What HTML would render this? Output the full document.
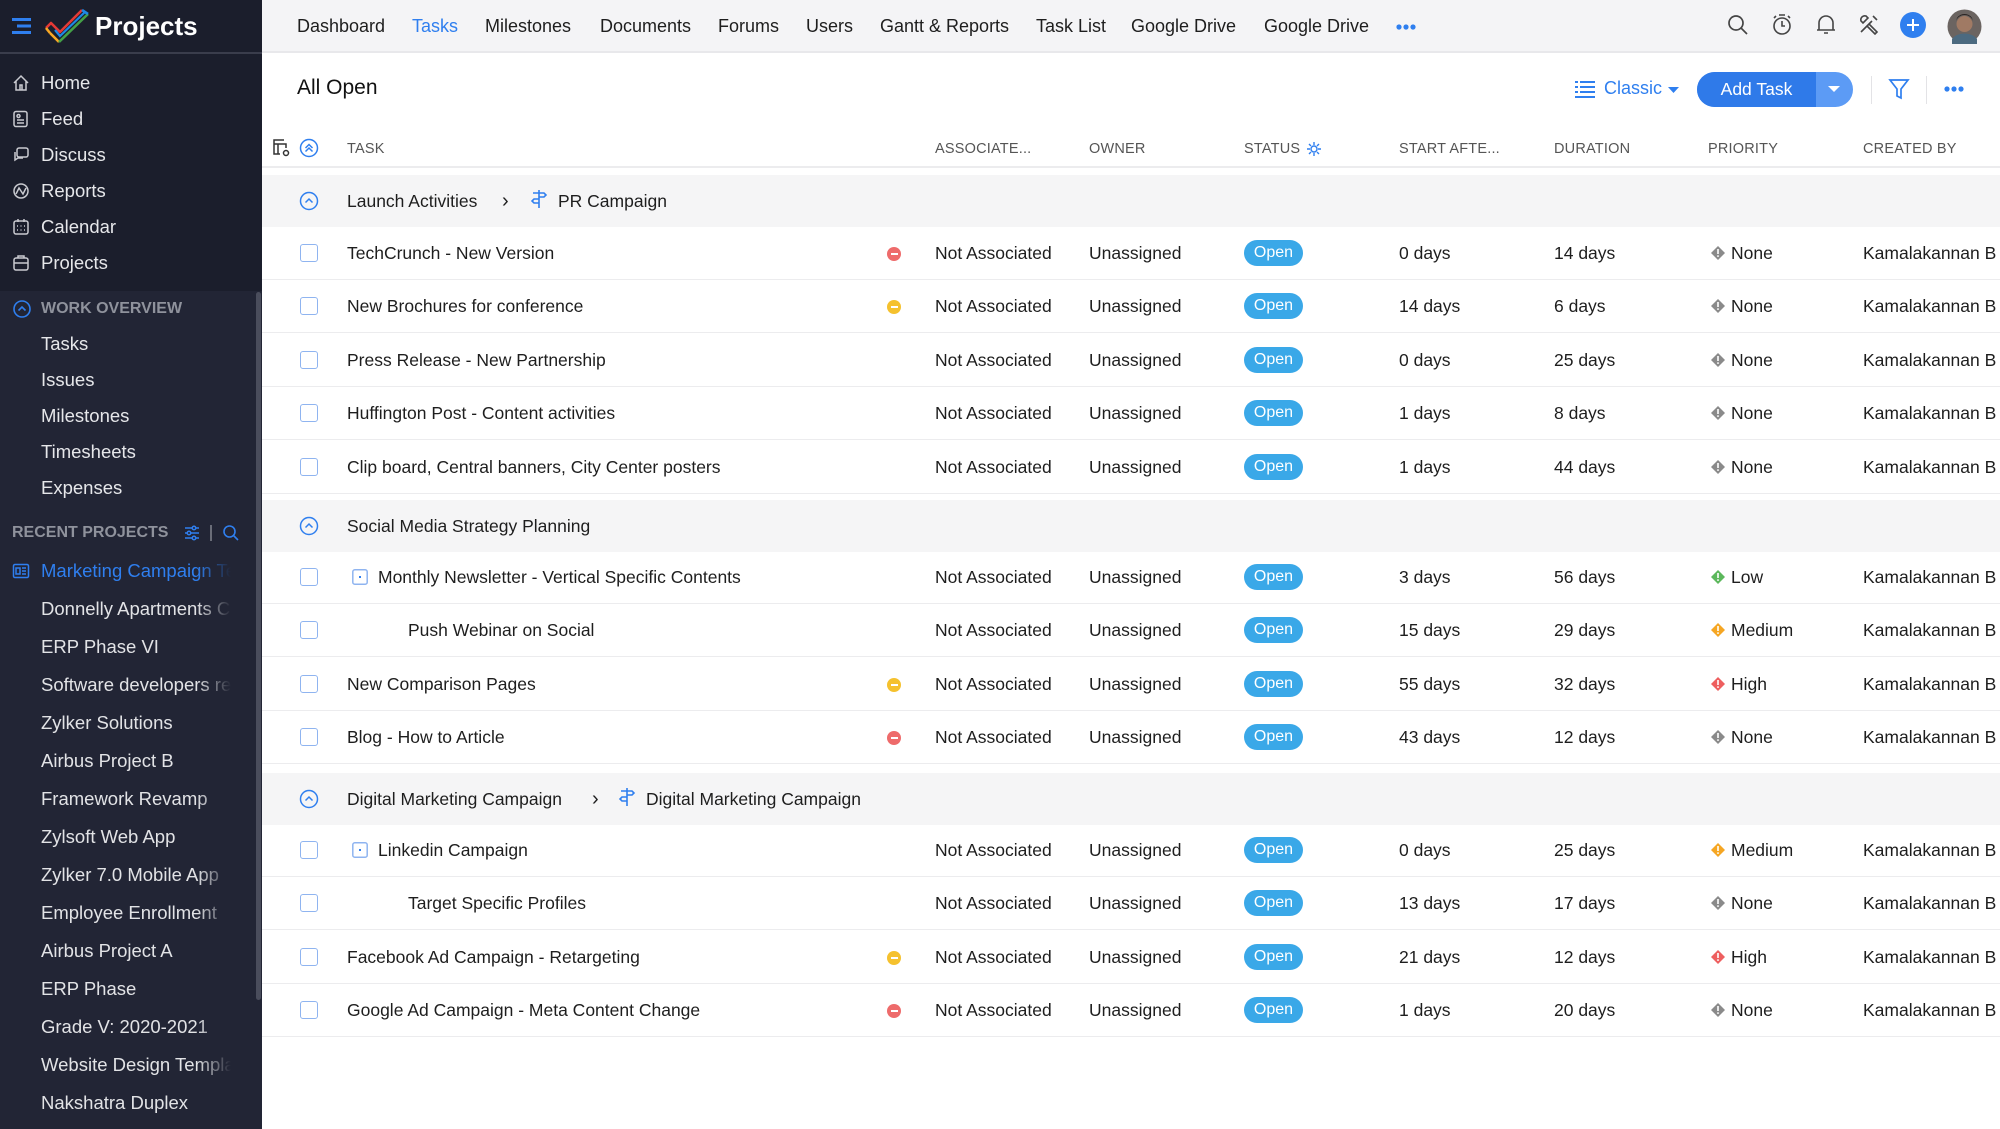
<!DOCTYPE html>
<html><head><meta charset="utf-8">
<style>
*{margin:0;padding:0;box-sizing:border-box}
body{width:2000px;height:1129px;overflow:hidden;background:#fff;font-family:"Liberation Sans",sans-serif;color:#1e1e1e;position:relative}
.a{position:absolute;white-space:nowrap}
#sb{position:absolute;left:0;top:0;width:262px;height:1129px;background:#222535}
#sbtop{position:absolute;left:0;top:0;width:262px;height:291px;background:#1b1e2c}
.si{position:absolute;left:41px;font-size:18.5px;color:#e6e7ea;white-space:nowrap}
.sic{position:absolute;left:12px}
.pi{position:absolute;left:41px;font-size:18.5px;color:#e2e3e6;width:190px;overflow:hidden;white-space:nowrap;
 -webkit-mask-image:linear-gradient(to right,#000 82%,transparent);mask-image:linear-gradient(to right,#000 82%,transparent)}
#top{position:absolute;left:262px;top:0;width:1738px;height:53px;background:#f4f4f6;border-bottom:2px solid #e8e8eb}
.nv{position:absolute;top:16px;font-size:18px;color:#1e1e1e;white-space:nowrap}
.hd{position:absolute;top:140px;font-size:14.5px;color:#555;letter-spacing:.2px;white-space:nowrap}
.row{position:absolute;left:262px;width:1738px;height:54px;border-bottom:1px solid #ececee}
.grp{position:absolute;left:262px;width:1738px;background:#f5f5f6}
.c{position:absolute;top:0;line-height:54px;font-size:17.5px;color:#1e1e1e;white-space:nowrap}
.cb{position:absolute;left:38px;top:18px;width:18px;height:18px;border:1.6px solid #8fb4f0;border-radius:3px}
.dot{position:absolute;left:625px;top:21px;width:14px;height:14px;border-radius:50%}
.dot:after{content:"";position:absolute;left:3.5px;top:6px;width:7px;height:2px;background:#fff}
.pill{position:absolute;left:982px;top:14px;width:59px;height:26px;border-radius:13px;background:#3aa8e8;color:#fff;font-size:16px;line-height:26px;text-align:center}
.pr{position:absolute;left:1449px;top:20px;width:14px;height:14px}
</style></head><body>

<div id="sb"><div id="sbtop"></div>
<div style="position:absolute;left:0;top:52px;width:262px;height:2px;background:#3a3d4c"></div>
<div style="position:absolute;left:256px;top:292px;width:5px;height:708px;background:#4a4d5c;border-radius:3px"></div>
<svg class="a" style="left:12px;top:18px" width="20" height="16"><rect x="0" y="0" width="19" height="3" fill="#2f7fef"/><rect x="5" y="6.5" width="14" height="3" fill="#2f7fef"/><rect x="0" y="13" width="19" height="3" fill="#2f7fef"/></svg>
<svg class="a" style="left:44px;top:6px" width="48" height="40" viewBox="0 0 48 40">
<path d="M2 22 L7 17 L16 26 L38 4" stroke="#e53935" stroke-width="2.6" fill="none" stroke-linejoin="round"/>
<path d="M6 27 L15 36" stroke="#f9a825" stroke-width="2.6" fill="none"/>
<path d="M2 22 L6 27" stroke="#f9a825" stroke-width="2.6" fill="none"/>
<path d="M15 36 L44 8" stroke="#43a047" stroke-width="2.6" fill="none"/>
<path d="M38 4 L44 8" stroke="#1e88e5" stroke-width="2.6" fill="none"/>
<path d="M11 24 L16 30 L41 6" stroke="#1e88e5" stroke-width="2.2" fill="none"/>
</svg>
<div class="a" style="left:95px;top:11px;font-size:26px;color:#fff;font-weight:bold">Projects</div>

<svg class="sic" style="top:74px" width="18" height="18" viewBox="0 0 18 18" fill="none" stroke="#c9cad0" stroke-width="1.5"><path d="M2 9 L9 2 L16 9 M4 7 V16 H14 V7 M8 16 V11 H10 V16"/></svg>
<div class="si" style="top:72px">Home</div>
<svg class="sic" style="top:110px" width="18" height="18" viewBox="0 0 18 18" fill="none" stroke="#c9cad0" stroke-width="1.5"><rect x="2" y="1.5" width="13" height="15" rx="2"/><path d="M5 10 H12 M5 13 H12"/><circle cx="6.5" cy="6" r="1.5"/></svg>
<div class="si" style="top:108px">Feed</div>
<svg class="sic" style="top:146px" width="18" height="18" viewBox="0 0 18 18" fill="none" stroke="#c9cad0" stroke-width="1.5"><rect x="5" y="2" width="11" height="9" rx="2"/><path d="M3 6 V14 L6 12 H11"/></svg>
<div class="si" style="top:144px">Discuss</div>
<svg class="sic" style="top:182px" width="18" height="18" viewBox="0 0 18 18" fill="none" stroke="#c9cad0" stroke-width="1.5"><circle cx="9" cy="9" r="7"/><path d="M4 12 L7 6 L11 12 L14 6"/></svg>
<div class="si" style="top:180px">Reports</div>
<svg class="sic" style="top:218px" width="18" height="18" viewBox="0 0 18 18" fill="none" stroke="#c9cad0" stroke-width="1.5"><rect x="2" y="3" width="14" height="13" rx="2"/><path d="M6 1 V4 M12 1 V4 M5 8 H6 M8.5 8 H9.5 M12 8 H13 M5 12 H6 M8.5 12 H9.5 M12 12 H13"/></svg>
<div class="si" style="top:216px">Calendar</div>
<svg class="sic" style="top:254px" width="18" height="18" viewBox="0 0 18 18" fill="none" stroke="#c9cad0" stroke-width="1.5"><rect x="2" y="4" width="14" height="12" rx="2"/><path d="M6 4 V2 H12 V4 M2 9 H16"/></svg>
<div class="si" style="top:252px">Projects</div>

<svg class="sic" style="top:299px" width="20" height="20" viewBox="0 0 20 20" fill="none" stroke="#2f7fef" stroke-width="1.6"><circle cx="10" cy="10" r="8"/><path d="M6.5 11.5 L10 8 L13.5 11.5"/></svg>
<div class="a" style="left:41px;top:300px;font-size:16px;color:#8f929c;font-weight:bold">WORK OVERVIEW</div>
<div class="si" style="top:333px">Tasks</div>
<div class="si" style="top:369px">Issues</div>
<div class="si" style="top:405px">Milestones</div>
<div class="si" style="top:441px">Timesheets</div>
<div class="si" style="top:477px">Expenses</div>

<div class="a" style="left:12px;top:524px;font-size:16px;color:#8f929c;font-weight:bold">RECENT PROJECTS</div>
<svg class="a" style="left:183px;top:524px" width="18" height="18" viewBox="0 0 18 18" fill="none" stroke="#2f7fef" stroke-width="1.5"><path d="M2 4 H16 M2 9 H16 M2 14 H16"/><circle cx="11" cy="4" r="1.8" fill="#222535"/><circle cx="6" cy="9" r="1.8" fill="#222535"/><circle cx="11" cy="14" r="1.8" fill="#222535"/></svg>
<div class="a" style="left:210px;top:525px;width:1.5px;height:16px;background:#6a6d78"></div>
<svg class="a" style="left:222px;top:524px" width="18" height="18" viewBox="0 0 18 18" fill="none" stroke="#2f7fef" stroke-width="1.6"><circle cx="7.5" cy="7.5" r="5.5"/><path d="M11.5 11.5 L16 16"/></svg>

<svg class="sic" style="top:562px" width="18" height="18" viewBox="0 0 18 18" fill="none" stroke="#2f7fef" stroke-width="1.5"><rect x="1.5" y="2.5" width="15" height="13" rx="1.5"/><rect x="4" y="6" width="4" height="6"/><path d="M10 6 H14 M10 9 H14 M10 12 H14"/></svg>
<div class="pi" style="top:560px;color:#2f7fef">Marketing Campaign Team</div>
<div class="pi" style="top:598px">Donnelly Apartments Construction</div>
<div class="pi" style="top:636px">ERP Phase VI</div>
<div class="pi" style="top:674px">Software developers recruitment</div>
<div class="pi" style="top:712px">Zylker Solutions</div>
<div class="pi" style="top:750px">Airbus Project B</div>
<div class="pi" style="top:788px">Framework Revamp</div>
<div class="pi" style="top:826px">Zylsoft Web App</div>
<div class="pi" style="top:864px">Zylker 7.0 Mobile App</div>
<div class="pi" style="top:902px">Employee Enrollment</div>
<div class="pi" style="top:940px">Airbus Project A</div>
<div class="pi" style="top:978px">ERP Phase</div>
<div class="pi" style="top:1016px">Grade V: 2020-2021</div>
<div class="pi" style="top:1054px">Website Design Templates</div>
<div class="pi" style="top:1092px">Nakshatra Duplex</div>
</div>

<div id="top"></div>
<div class="nv" style="left:297px">Dashboard</div>
<div class="nv" style="left:412px;color:#2f7fef">Tasks</div>
<div class="nv" style="left:485px">Milestones</div>
<div class="nv" style="left:600px">Documents</div>
<div class="nv" style="left:718px">Forums</div>
<div class="nv" style="left:806px">Users</div>
<div class="nv" style="left:880px">Gantt &amp; Reports</div>
<div class="nv" style="left:1036px">Task List</div>
<div class="nv" style="left:1131px">Google Drive</div>
<div class="nv" style="left:1264px">Google Drive</div>
<svg class="a" style="left:1396px;top:24px" width="20" height="6"><circle cx="3" cy="3" r="2.6" fill="#2f7fef"/><circle cx="10" cy="3" r="2.6" fill="#2f7fef"/><circle cx="17" cy="3" r="2.6" fill="#2f7fef"/></svg>

<svg class="a" style="left:1727px;top:14px" width="22" height="22" viewBox="0 0 22 22" fill="none" stroke="#444" stroke-width="1.7"><circle cx="9" cy="9" r="7"/><path d="M14 14 L20 20"/></svg>
<svg class="a" style="left:1771px;top:13px" width="22" height="23" viewBox="0 0 22 23" fill="none" stroke="#444" stroke-width="1.6"><circle cx="11" cy="13" r="8"/><path d="M11 8 V13 H14 M8 2 H14 M3 5 L5 3 M19 5 L17 3"/></svg>
<svg class="a" style="left:1815px;top:13px" width="22" height="23" viewBox="0 0 22 23" fill="none" stroke="#444" stroke-width="1.6"><path d="M4 17 V10 A7 7 0 0 1 18 10 V17 H4 Z M2 17 H20 M9 20 H13"/></svg>
<svg class="a" style="left:1858px;top:13px" width="22" height="22" viewBox="0 0 22 22" fill="none" stroke="#444" stroke-width="1.6"><path d="M3 19 L14 8 M8 3 A4 4 0 0 0 3 8 L5 10 L10 5 Z M11 11 L19 19 L17 21 L9 13"/><path d="M15 3 L19 7"/></svg>
<svg class="a" style="left:1900px;top:12px" width="26" height="26"><circle cx="13" cy="13" r="13" fill="#2f7fef"/><path d="M13 7 V19 M7 13 H19" stroke="#fff" stroke-width="2"/></svg>
<svg class="a" style="left:1947px;top:9px" width="35" height="35"><circle cx="17.5" cy="17.5" r="17" fill="#6b6461"/><circle cx="17.5" cy="15" r="8" fill="#a07a64"/><path d="M9 12 A9 9 0 0 1 26 12 L25 9 A9 9 0 0 0 10 9Z" fill="#2a2220"/><path d="M5 30 A14 10 0 0 1 30 30 L30 35 L5 35Z" fill="#4c6a80"/></svg>

<div class="a" style="left:297px;top:76px;font-size:21px;color:#111">All Open</div>
<svg class="a" style="left:1575px;top:80px" width="20" height="18" viewBox="0 0 20 18" fill="#2f7fef"><rect x="0" y="1" width="3" height="2"/><rect x="5" y="1" width="15" height="2"/><rect x="0" y="6" width="3" height="2"/><rect x="5" y="6" width="15" height="2"/><rect x="0" y="11" width="3" height="2"/><rect x="5" y="11" width="15" height="2"/><rect x="0" y="16" width="20" height="2"/></svg>
<div class="a" style="left:1604px;top:78px;font-size:18px;color:#2f7fef">Classic</div>
<svg class="a" style="left:1668px;top:87px" width="11" height="7"><path d="M0 0 H11 L5.5 6Z" fill="#2f7fef"/></svg>
<div class="a" style="left:1697px;top:72px;width:156px;height:35px;border-radius:18px;background:#5c9bf5;overflow:hidden">
 <div style="position:absolute;left:0;top:0;width:119px;height:35px;background:#2f7ae9"></div>
 <div style="position:absolute;left:0;top:0;width:119px;line-height:35px;text-align:center;color:#fff;font-size:17.5px">Add Task</div>
 <svg style="position:absolute;left:131px;top:14px" width="12" height="7"><path d="M0 0 H12 L6 6Z" fill="#fff"/></svg>
</div>
<div class="a" style="left:1871px;top:76px;width:1px;height:28px;background:#e3e3e6"></div>
<svg class="a" style="left:1888px;top:78px" width="22" height="22" viewBox="0 0 22 22" fill="none" stroke="#2f7fef" stroke-width="1.7"><path d="M2 2 H20 L13 11 V20 L9 18 V11 Z"/></svg>
<div class="a" style="left:1926px;top:76px;width:1px;height:28px;background:#e3e3e6"></div>
<svg class="a" style="left:1944px;top:86px" width="20" height="6"><circle cx="3" cy="3" r="2.6" fill="#2f7fef"/><circle cx="10" cy="3" r="2.6" fill="#2f7fef"/><circle cx="17" cy="3" r="2.6" fill="#2f7fef"/></svg>

<svg class="a" style="left:271px;top:138px" width="20" height="20" viewBox="0 0 20 20" fill="none" stroke="#333" stroke-width="1.5"><path d="M13 2 H3 V16 H9 M3 6 H15 V10 M7 6 V16"/><circle cx="15" cy="15" r="2.5"/></svg>
<svg class="a" style="left:299px;top:138px" width="20" height="20" viewBox="0 0 20 20" fill="none" stroke="#2f7fef" stroke-width="1.5"><circle cx="10" cy="10" r="8.5"/><path d="M6.5 10 L10 6.5 L13.5 10 M6.5 13.5 L10 10 L13.5 13.5"/></svg>
<div class="hd" style="left:347px;top:141px">TASK</div>
<div class="hd" style="left:935px;top:141px">ASSOCIATE...</div>
<div class="hd" style="left:1089px;top:141px">OWNER</div>
<div class="hd" style="left:1244px;top:141px">STATUS</div>
<svg class="a" style="left:1307px;top:142px" width="14" height="14" viewBox="0 0 14 14" fill="none" stroke="#2f7fef" stroke-width="1.4"><circle cx="7" cy="7" r="3"/><path d="M7 0 V3 M7 11 V14 M0 7 H3 M11 7 H14 M2 2 L4 4 M10 10 L12 12 M12 2 L10 4 M4 10 L2 12"/></svg>
<div class="hd" style="left:1399px;top:141px">START AFTE...</div>
<div class="hd" style="left:1554px;top:141px">DURATION</div>
<div class="hd" style="left:1708px;top:141px">PRIORITY</div>
<div class="hd" style="left:1863px;top:141px">CREATED BY</div>
<div class="a" style="left:262px;top:166px;width:1738px;height:2px;background:#ececee"></div>

<svg width="0" height="0" style="position:absolute">
<defs>
<symbol id="gc" viewBox="0 0 20 20"><circle cx="10" cy="10" r="8.5" fill="none" stroke="#2f7fef" stroke-width="1.5"/><path d="M6.5 11.5 L10 8 L13.5 11.5" fill="none" stroke="#2f7fef" stroke-width="1.5"/></symbol>
<symbol id="ms" viewBox="0 0 18 20"><path d="M9 1 V19 M3 4 H14 L16 6 L14 8 H9 M9 10 H4 L2 12 L4 14 H9" fill="none" stroke="#2f7fef" stroke-width="1.6"/></symbol>
<symbol id="dm" viewBox="0 0 14 14"><path d="M7 0 L14 7 L7 14 L0 7Z"/><rect x="6.2" y="3" width="1.6" height="5" fill="#fff"/><rect x="6.2" y="9.3" width="1.6" height="1.6" fill="#fff"/></symbol>
</defs></svg>

<div class="grp" style="top:175px;height:52px">
 <svg class="a" style="left:37px;top:16px" width="20" height="20"><use href="#gc"/></svg>
 <div class="c" style="left:85px;line-height:52px">Launch Activities</div>
 <div class="c" style="left:240px;line-height:52px;font-size:20px">&#x203A;</div>
 <svg class="a" style="left:268px;top:14px" width="18" height="20"><use href="#ms"/></svg>
 <div class="c" style="left:296px;line-height:52px">PR Campaign</div>
</div>

<div class="row" style="top:226px"><div class="cb"></div><div class="c" style="left:85px">TechCrunch - New Version</div><div class="dot" style="background:#ee6b6b"></div><div class="c" style="left:673px">Not Associated</div><div class="c" style="left:827px">Unassigned</div><div class="pill">Open</div><div class="c" style="left:1137px">0 days</div><div class="c" style="left:1292px">14 days</div><svg class="pr" fill="#8a8a8a"><use href="#dm"/></svg><div class="c" style="left:1469px">None</div><div class="c" style="left:1601px">Kamalakannan B</div></div>
<div class="row" style="top:279px"><div class="cb"></div><div class="c" style="left:85px">New Brochures for conference</div><div class="dot" style="background:#f5c12e"></div><div class="c" style="left:673px">Not Associated</div><div class="c" style="left:827px">Unassigned</div><div class="pill">Open</div><div class="c" style="left:1137px">14 days</div><div class="c" style="left:1292px">6 days</div><svg class="pr" fill="#8a8a8a"><use href="#dm"/></svg><div class="c" style="left:1469px">None</div><div class="c" style="left:1601px">Kamalakannan B</div></div>
<div class="row" style="top:333px"><div class="cb"></div><div class="c" style="left:85px">Press Release - New Partnership</div><div class="c" style="left:673px">Not Associated</div><div class="c" style="left:827px">Unassigned</div><div class="pill">Open</div><div class="c" style="left:1137px">0 days</div><div class="c" style="left:1292px">25 days</div><svg class="pr" fill="#8a8a8a"><use href="#dm"/></svg><div class="c" style="left:1469px">None</div><div class="c" style="left:1601px">Kamalakannan B</div></div>
<div class="row" style="top:386px"><div class="cb"></div><div class="c" style="left:85px">Huffington Post - Content activities</div><div class="c" style="left:673px">Not Associated</div><div class="c" style="left:827px">Unassigned</div><div class="pill">Open</div><div class="c" style="left:1137px">1 days</div><div class="c" style="left:1292px">8 days</div><svg class="pr" fill="#8a8a8a"><use href="#dm"/></svg><div class="c" style="left:1469px">None</div><div class="c" style="left:1601px">Kamalakannan B</div></div>
<div class="row" style="top:440px"><div class="cb"></div><div class="c" style="left:85px">Clip board, Central banners, City Center posters</div><div class="c" style="left:673px">Not Associated</div><div class="c" style="left:827px">Unassigned</div><div class="pill">Open</div><div class="c" style="left:1137px">1 days</div><div class="c" style="left:1292px">44 days</div><svg class="pr" fill="#8a8a8a"><use href="#dm"/></svg><div class="c" style="left:1469px">None</div><div class="c" style="left:1601px">Kamalakannan B</div></div>

<div class="grp" style="top:500px;height:52px">
 <svg class="a" style="left:37px;top:16px" width="20" height="20"><use href="#gc"/></svg>
 <div class="c" style="left:85px;line-height:52px">Social Media Strategy Planning</div>
</div>
<div class="row" style="top:550px"><div class="cb"></div><svg class="a" style="left:90px;top:19px" width="16" height="16"><rect x="0.8" y="0.8" width="14.4" height="14.4" rx="2" fill="none" stroke="#8fb4f0" stroke-width="1.5"/><rect x="7" y="7" width="2" height="2" fill="#2f7fef"/></svg><div class="c" style="left:116px">Monthly Newsletter - Vertical Specific Contents</div><div class="c" style="left:673px">Not Associated</div><div class="c" style="left:827px">Unassigned</div><div class="pill">Open</div><div class="c" style="left:1137px">3 days</div><div class="c" style="left:1292px">56 days</div><svg class="pr" fill="#5cb85c"><use href="#dm"/></svg><div class="c" style="left:1469px">Low</div><div class="c" style="left:1601px">Kamalakannan B</div></div>
<div class="row" style="top:603px"><div class="cb"></div><div class="c" style="left:146px">Push Webinar on Social</div><div class="c" style="left:673px">Not Associated</div><div class="c" style="left:827px">Unassigned</div><div class="pill">Open</div><div class="c" style="left:1137px">15 days</div><div class="c" style="left:1292px">29 days</div><svg class="pr" fill="#f5a623"><use href="#dm"/></svg><div class="c" style="left:1469px">Medium</div><div class="c" style="left:1601px">Kamalakannan B</div></div>
<div class="row" style="top:657px"><div class="cb"></div><div class="c" style="left:85px">New Comparison Pages</div><div class="dot" style="background:#f5c12e"></div><div class="c" style="left:673px">Not Associated</div><div class="c" style="left:827px">Unassigned</div><div class="pill">Open</div><div class="c" style="left:1137px">55 days</div><div class="c" style="left:1292px">32 days</div><svg class="pr" fill="#ee5f5f"><use href="#dm"/></svg><div class="c" style="left:1469px">High</div><div class="c" style="left:1601px">Kamalakannan B</div></div>
<div class="row" style="top:710px"><div class="cb"></div><div class="c" style="left:85px">Blog - How to Article</div><div class="dot" style="background:#ee6b6b"></div><div class="c" style="left:673px">Not Associated</div><div class="c" style="left:827px">Unassigned</div><div class="pill">Open</div><div class="c" style="left:1137px">43 days</div><div class="c" style="left:1292px">12 days</div><svg class="pr" fill="#8a8a8a"><use href="#dm"/></svg><div class="c" style="left:1469px">None</div><div class="c" style="left:1601px">Kamalakannan B</div></div>

<div class="grp" style="top:773px;height:52px">
 <svg class="a" style="left:37px;top:16px" width="20" height="20"><use href="#gc"/></svg>
 <div class="c" style="left:85px;line-height:52px">Digital Marketing Campaign</div>
 <div class="c" style="left:330px;line-height:52px;font-size:20px">&#x203A;</div>
 <svg class="a" style="left:356px;top:14px" width="18" height="20"><use href="#ms"/></svg>
 <div class="c" style="left:384px;line-height:52px">Digital Marketing Campaign</div>
</div>
<div class="row" style="top:823px"><div class="cb"></div><svg class="a" style="left:90px;top:19px" width="16" height="16"><rect x="0.8" y="0.8" width="14.4" height="14.4" rx="2" fill="none" stroke="#8fb4f0" stroke-width="1.5"/><rect x="7" y="7" width="2" height="2" fill="#2f7fef"/></svg><div class="c" style="left:116px">Linkedin Campaign</div><div class="c" style="left:673px">Not Associated</div><div class="c" style="left:827px">Unassigned</div><div class="pill">Open</div><div class="c" style="left:1137px">0 days</div><div class="c" style="left:1292px">25 days</div><svg class="pr" fill="#f5a623"><use href="#dm"/></svg><div class="c" style="left:1469px">Medium</div><div class="c" style="left:1601px">Kamalakannan B</div></div>
<div class="row" style="top:876px"><div class="cb"></div><div class="c" style="left:146px">Target Specific Profiles</div><div class="c" style="left:673px">Not Associated</div><div class="c" style="left:827px">Unassigned</div><div class="pill">Open</div><div class="c" style="left:1137px">13 days</div><div class="c" style="left:1292px">17 days</div><svg class="pr" fill="#8a8a8a"><use href="#dm"/></svg><div class="c" style="left:1469px">None</div><div class="c" style="left:1601px">Kamalakannan B</div></div>
<div class="row" style="top:930px"><div class="cb"></div><div class="c" style="left:85px">Facebook Ad Campaign - Retargeting</div><div class="dot" style="background:#f5c12e"></div><div class="c" style="left:673px">Not Associated</div><div class="c" style="left:827px">Unassigned</div><div class="pill">Open</div><div class="c" style="left:1137px">21 days</div><div class="c" style="left:1292px">12 days</div><svg class="pr" fill="#ee5f5f"><use href="#dm"/></svg><div class="c" style="left:1469px">High</div><div class="c" style="left:1601px">Kamalakannan B</div></div>
<div class="row" style="top:983px"><div class="cb"></div><div class="c" style="left:85px">Google Ad Campaign - Meta Content Change</div><div class="dot" style="background:#ee6b6b"></div><div class="c" style="left:673px">Not Associated</div><div class="c" style="left:827px">Unassigned</div><div class="pill">Open</div><div class="c" style="left:1137px">1 days</div><div class="c" style="left:1292px">20 days</div><svg class="pr" fill="#8a8a8a"><use href="#dm"/></svg><div class="c" style="left:1469px">None</div><div class="c" style="left:1601px">Kamalakannan B</div></div>

</body></html>
